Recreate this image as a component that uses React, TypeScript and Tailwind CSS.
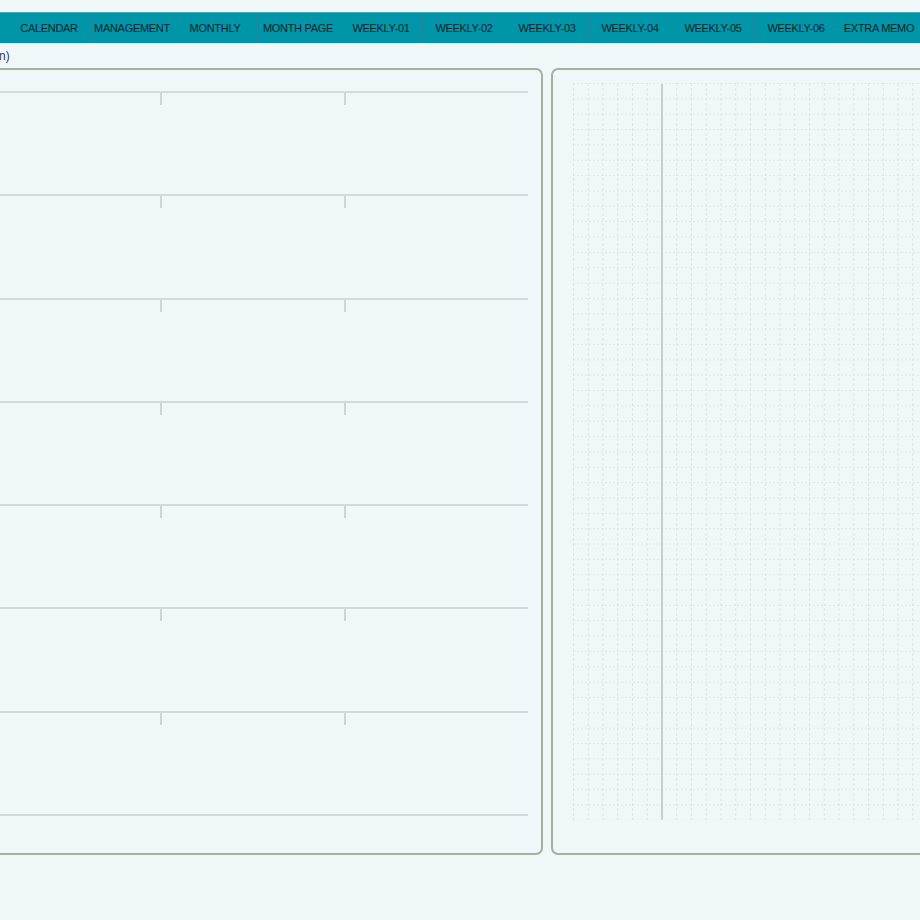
import React from 'react';

const tabs = [
  'CALENDAR',
  'MANAGEMENT',
  'MONTHLY',
  'MONTH PAGE',
  'WEEKLY-01',
  'WEEKLY-02',
  'WEEKLY-03',
  'WEEKLY-04',
  'WEEKLY-05',
  'WEEKLY-06',
  'EXTRA MEMO',
];

// Ruled lines in the schedule panel, each with two short ticks below it
const ScheduleRows: React.FC = () => (
  <div className="pt-[21px] pr-[13px]">
    {[...Array(7)].map((_, i) => (
      <div key={i} className="h-[103.3px]">
        <div className="h-[2px] bg-[#d3d9dc]" />
        <div className="flex">
          <div className="ml-[178px] w-[2px] h-[12px] bg-[#cdd3d6]" />
          <div className="ml-[182px] w-[2px] h-[12px] bg-[#cdd3d6]" />
        </div>
      </div>
    ))}
    <div className="h-[2px] bg-[#d3d9dc]" />
  </div>
);

// Dotted graph-paper grid for the memo panel
const MemoGrid: React.FC = () => {
  const cols = 24;
  const rows = 48;
  const cw = 14.75;
  const rh = 15.35;
  const w = cols * cw;
  const h = rows * rh;
  return (
    <svg width={w} height={h} className="block">
      {[...Array(rows + 1)].map((_, i) => (
        <line
          key={`h${i}`}
          x1={0}
          x2={w}
          y1={i * rh + 0.5}
          y2={i * rh + 0.5}
          stroke="#e0e7ea"
          strokeWidth={1}
          strokeDasharray="2 2"
        />
      ))}
      {[...Array(cols + 1)].map((_, i) =>
        i === 6 ? null : (
          <line
            key={`v${i}`}
            x1={i * cw + 0.5}
            x2={i * cw + 0.5}
            y1={0}
            y2={h}
            stroke="#dde5e8"
            strokeWidth={1}
            strokeDasharray="3 2"
          />
        ),
      )}
      <line x1={6 * cw + 0.5} x2={6 * cw + 0.5} y1={1} y2={h} stroke="#b9c0c2" strokeWidth={1.5} />
    </svg>
  );
};

const App: React.FC = () => {
  return (
    <div
      className="w-[920px] h-[920px] overflow-hidden bg-[#eff7f9] pt-[12px]"
      style={{ fontFamily: '"Liberation Sans", Arial, sans-serif' }}
    >
      {/* Section tabs */}
      <div className="flex h-[31px] bg-[#0095a9] border-t border-[#3fb0c0]">
        <div className="w-[8px] shrink-0 border-r border-[#1a8a9c]" />
        {tabs.map((t) => (
          <div
            key={t}
            className="w-[83px] shrink-0 flex items-center justify-center border-r border-[#1a8a9c] text-[11px] text-[#082428] tracking-[-0.3px]"
          >
            {t}
          </div>
        ))}
      </div>

      <div className="h-[25px] flex items-center text-[12px] text-[#3a3f42] -ml-[1px]">n)</div>

      <div className="flex gap-[8px]">
        <div className="-ml-[20px] w-[563px] h-[787px] shrink-0 border-2 border-[#a7af9f] rounded-[7px]">
          <ScheduleRows />
        </div>
        <div className="w-[420px] h-[787px] shrink-0 border-2 border-[#a7af9f] rounded-[7px] pl-[20px] pt-[13px]">
          <MemoGrid />
        </div>
      </div>
    </div>
  );
};

export default App;
